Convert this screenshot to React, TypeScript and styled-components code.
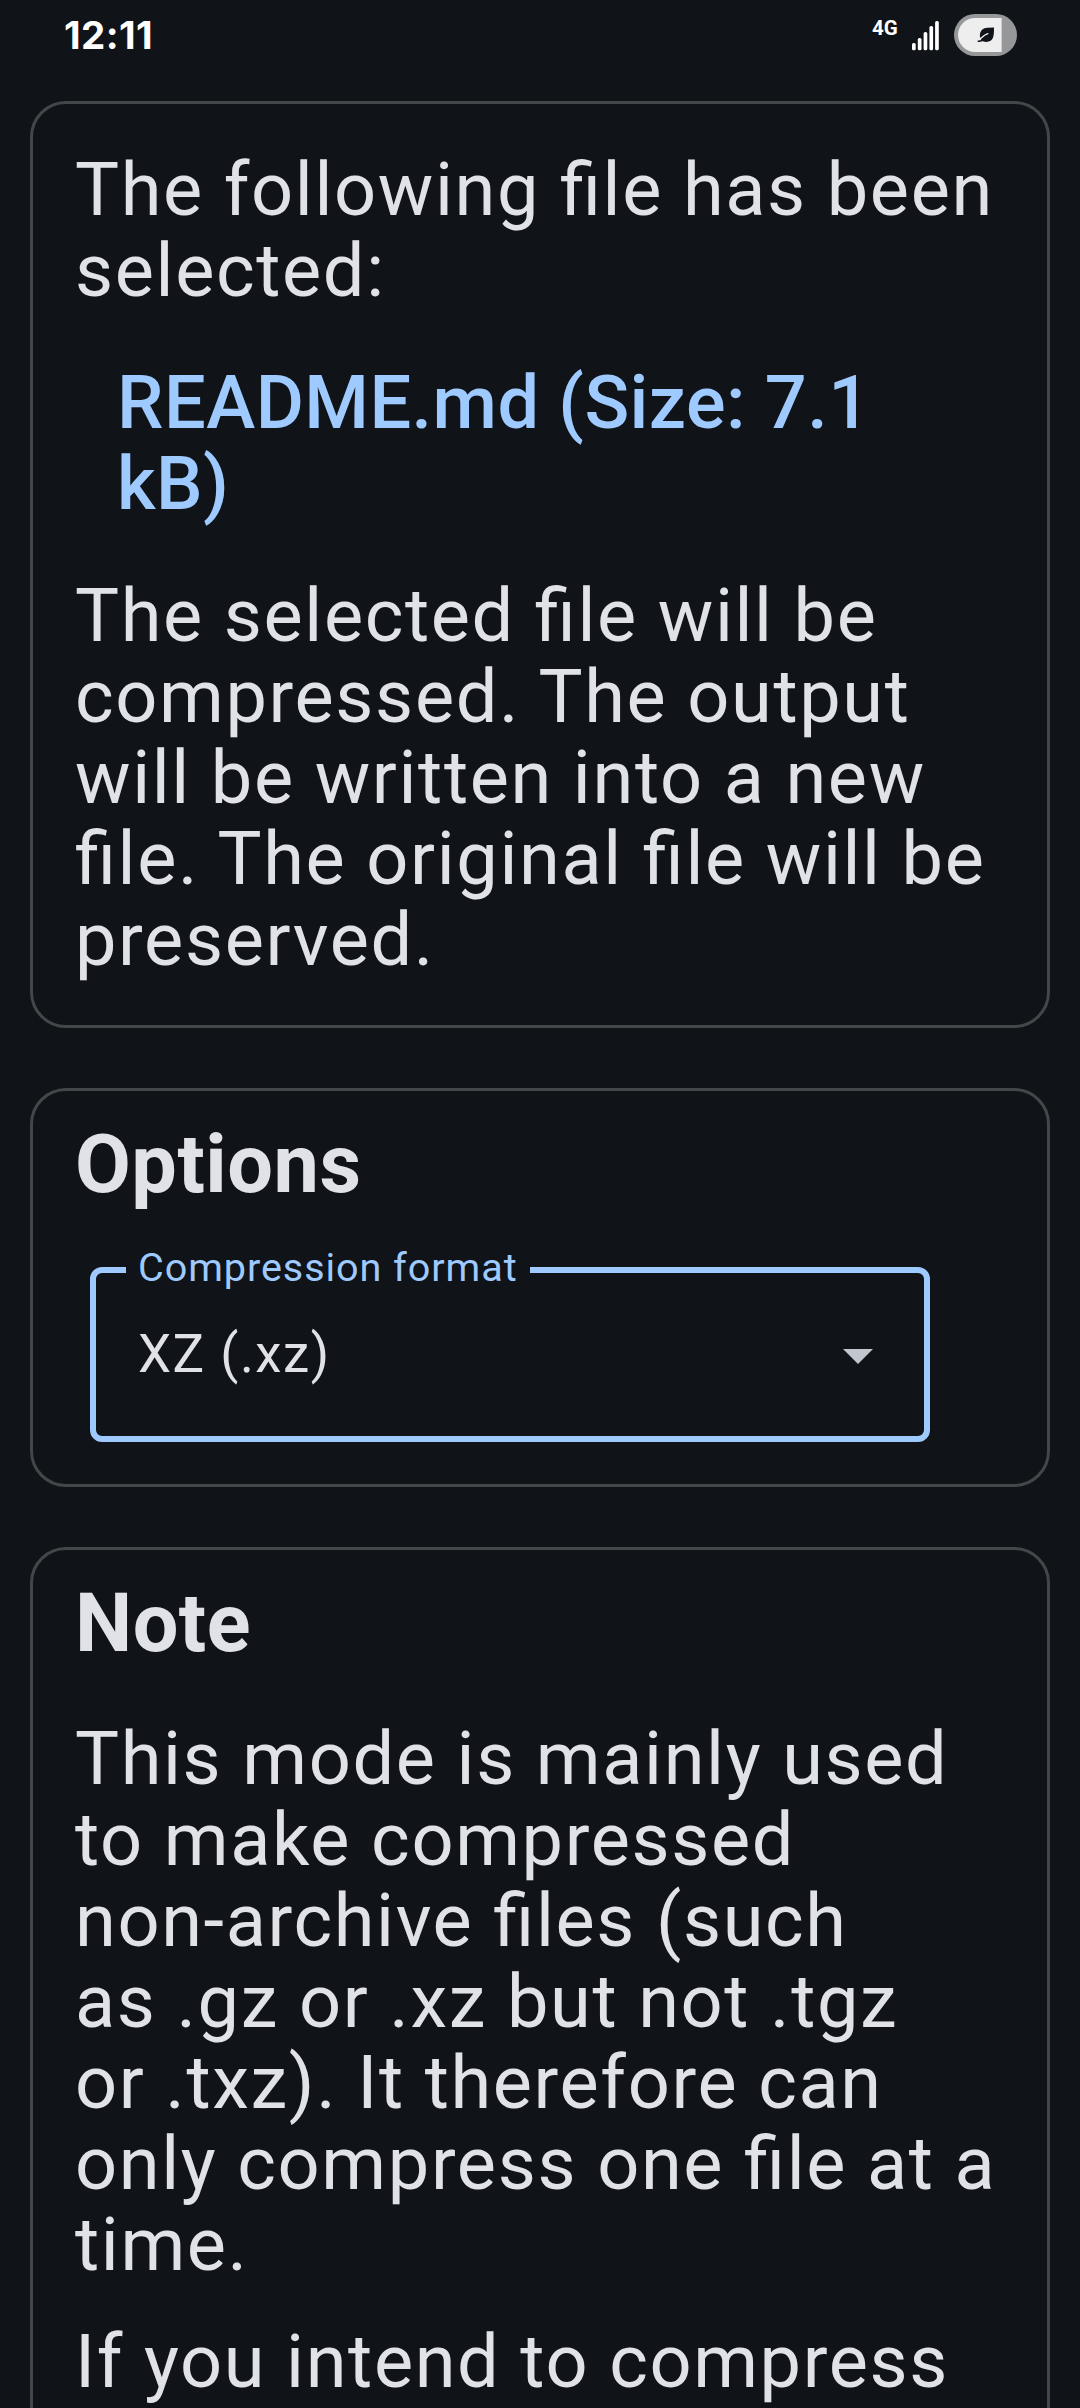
import React from "react";
import styled, { createGlobalStyle } from "styled-components";

const Global = createGlobalStyle`
  * { box-sizing: border-box; }
  html, body { margin: 0; height: 2408px; overflow: hidden; background: #101318; }
  body { font-family: Roboto, sans-serif; color: #e1e2e8; }
`;

const Screen = styled.main`
  height: 2408px;
  overflow: hidden;
  background: #101318;
`;

const StatusBar = styled.header`
  display: flex;
  justify-content: space-between;
  align-items: flex-start;
  height: 101px;
  padding: 12px 63px 0 64px;
  color: #fff;
`;

const Clock = styled.time`
  font: 700 38.5px/46px Inter, sans-serif;
  letter-spacing: 0.4px;
`;

const StatusIcons = styled.div`
  display: flex;
  align-items: flex-start;
  padding-top: 2px;
`;

const Network = styled.span`
  width: 40px;
  margin-top: 2px;
  font-size: 20.5px;
  line-height: 24px;
  font-weight: 700;
`;

const Signal = styled.svg`
  width: 27px;
  height: 31px;
  margin: 6px 15px 0 0;
`;

const Battery = styled.svg`
  width: 63px;
  height: 42px;
`;

const Content = styled.div`
  display: flex;
  flex-direction: column;
  gap: 60px;
  padding: 0 30px;
`;

const Card = styled.section<{ $height: number; $top: number }>`
  flex: none;
  height: ${p => p.$height}px;
  padding: ${p => p.$top}px 42px 0;
  border: 3px solid #44474a;
  border-radius: 36px;
`;

const Body = styled.p<{ $gap?: number }>`
  margin: ${p => p.$gap ?? 0}px 0 0;
  font-size: 73.9px;
  line-height: 81px;
  letter-spacing: 1.62px;
  white-space: nowrap;
  font-feature-settings: "liga" 1;
`;

const FileName = styled(Body)`
  padding-left: 42px;
  font-weight: 500;
  letter-spacing: 0.46px;
  color: #9ecaff;
`;

const Heading = styled.h2`
  margin: 0;
  font-size: 81px;
  line-height: 91px;
  font-weight: 700;
  letter-spacing: 0.5px;
`;

const Select = styled.fieldset`
  width: 840px;
  height: 196px;
  margin: 36px 0 0 15px;
  padding: 0 51px 0 30px;
  border: 6px solid #9ecaff;
  border-radius: 12px;
`;

const Label = styled.legend`
  width: 404px;
  padding: 0 0 5px 12px;
  font-size: 39.6px;
  line-height: 43px;
  letter-spacing: 0.92px;
  white-space: nowrap;
  color: #9ecaff;
`;

const Value = styled.div`
  display: flex;
  justify-content: space-between;
  align-items: center;
  margin-top: 29px;
  padding-left: 12px;
  font-size: 52.8px;
  line-height: 62px;
  letter-spacing: 1.5px;
`;

const Arrow = styled.svg`
  width: 30px;
  height: 15px;
  margin-top: 5px;
`;

const Line = styled.span`
  display: block;
`;

const lines = (rows: string[]) => rows.map(row => <Line key={row}>{row}</Line>);

const bars = [
  [0, 23],
  [5.8, 18],
  [11.6, 12],
  [17.4, 6],
  [23.1, 1],
];

export default function App() {
  return (
    <Screen>
      <Global />
      <StatusBar>
        <Clock>12:11</Clock>
        <StatusIcons>
          <Network>4G</Network>
          <Signal viewBox="0 0 27 31" fill="#fff">
            {bars.map(([x, y]) => (
              <rect key={x} x={x} y={y} width="3.7" height={30.3 - y} rx="1.6" />
            ))}
          </Signal>
          <Battery viewBox="0 0 63 42" fill="none">
            <rect width="63" height="42" rx="21" fill="#969798" />
            <path d="M47.6 4H21a17 17 0 0 0 0 34h26.6Z" fill="#eee" />
            <path d="M40 13.6C40 22 39.8 27.9 32.3 27.9c-2.2 0-3.7-.6-4.7-1.6-1.2-1.2-1.7-2.7-1.7-4.7 0-5 3.2-7.6 7.6-7.8Z" fill="#101318" />
            <path d="M33.8 19.6c-2.4.9-4.5 2.4-6.3 4.2l-2.6 1.2" stroke="#eee" strokeWidth="1.4" strokeLinecap="round" />
            <path d="M24.2 27.3c2.4.1 4.2-.6 5.4-2" stroke="#101318" strokeWidth="1.5" strokeLinecap="round" />
          </Battery>
        </StatusIcons>
      </StatusBar>
      <Content>
        <Card $height={927} $top={45}>
          <Body>{lines(["The following file has been", "selected:"])}</Body>
          <FileName $gap={51}>{lines(["README.md (Size: 7.1", "kB)"])}</FileName>
          <Body $gap={51}>
            {lines([
              "The selected file will be",
              "compressed. The output",
              "will be written into a new",
              "file. The original file will be",
              "preserved.",
            ])}
          </Body>
        </Card>
        <Card $height={399} $top={28}>
          <Heading>Options</Heading>
          <Select>
            <Label>Compression format</Label>
            <Value>
              XZ (.xz)
              <Arrow viewBox="0 0 30 15">
                <path d="M0 0h30L15 15Z" fill="#c2c7cf" />
              </Arrow>
            </Value>
          </Select>
        </Card>
        <Card $height={1200} $top={28}>
          <Heading>Note</Heading>
          <Body $gap={49}>
            {lines([
              "This mode is mainly used",
              "to make compressed",
              "non-archive files (such",
              "as .gz or .xz but not .tgz",
              "or .txz). It therefore can",
              "only compress one file at a",
              "time.",
            ])}
          </Body>
          <Body $gap={36}>If you intend to compress</Body>
        </Card>
      </Content>
    </Screen>
  );
}
